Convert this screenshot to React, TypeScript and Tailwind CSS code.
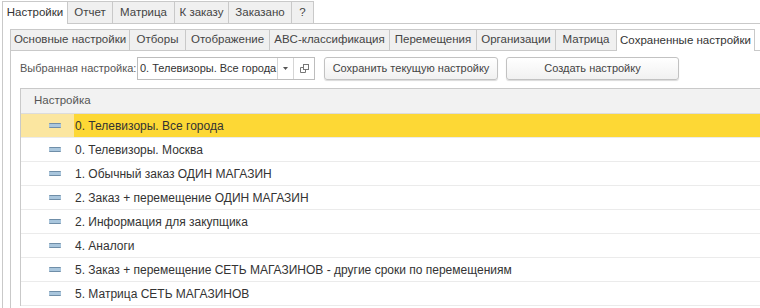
import React from "react";

type Tab = [string, string];

const outerTabs: Tab[] = [
  ["Настройки", "w-[66px]"],
  ["Отчет", "w-[46px]"],
  ["Матрица", "w-[63px]"],
  ["К заказу", "w-[55px]"],
  ["Заказано", "w-[64px]"],
  ["?", "w-[23px]"],
];
const innerTabs: Tab[] = [
  ["Основные настройки", "w-[120px]"],
  ["Отборы", "w-[57px]"],
  ["Отображение", "w-[85px]"],
  ["ABC-классификация", "w-[121px]"],
  ["Перемещения", "w-[88px]"],
  ["Организации", "w-[80px]"],
  ["Матрица", "w-[62px]"],
  ["Сохраненные настройки", "w-[139px]"],
];

const rows = [
  "0. Телевизоры. Все города",
  "0. Телевизоры. Москва",
  "1. Обычный заказ ОДИН МАГАЗИН",
  "2. Заказ + перемещение ОДИН МАГАЗИН",
  "2. Информация для закупщика",
  "4. Аналоги",
  "5. Заказ + перемещение СЕТЬ МАГАЗИНОВ - другие сроки по перемещениям",
  "5. Матрица СЕТЬ МАГАЗИНОВ",
];

function Tabs({ items, active, height }: { items: Tab[]; active: number; height: string }) {
  return (
    <div className={`flex ${height} text-[11.5px] whitespace-nowrap`}>
      {items.map(([t, w], i) => (
        <div
          key={t}
          className={
            i === active
              ? `${w} flex items-center justify-center bg-white border border-b-0 border-[#c9c9c9] -ml-px first:ml-0 text-[#333] relative z-10`
              : `${w} flex items-center justify-center bg-[#f0f0f0] border border-[#c9c9c9] -ml-px first:ml-0 text-[#444]`
          }
        >
          {t}
        </div>
      ))}
      <div className="flex-1 border-b border-[#c9c9c9]" />
    </div>
  );
}

function RowIcon() {
  return (
    <div className="w-3 h-[5px] rounded-[1px] bg-[#a9c6dd] border-y border-[#6f8ea8]" />
  );
}

export default function App() {
  return (
    <div className="w-[760px] h-[308px] overflow-hidden bg-white text-[12px] font-['Liberation_Sans',Arial,sans-serif] pl-[2px] pt-px">
      <Tabs items={outerTabs} active={0} height="h-[23px]" />
      <div className="border-l border-[#c9c9c9] -mt-px h-full pl-[7px] pt-[6px]">
        <Tabs items={innerTabs} active={7} height="h-[22px]" />
        <div className="border-l border-[#c9c9c9] -mt-px h-full pl-[9px]">
          <div className="flex items-center pt-[7px] text-[11px] whitespace-nowrap">
            <span className="text-[#555] w-[117px]">Выбранная настройка:</span>
            <div className="flex h-[23px] border border-[#bdbdbd] bg-white">
              <div className="w-[139px] flex items-center pl-[2px] text-[#333] overflow-hidden text-[11px]">
                0. Телевизоры. Все города
              </div>
              <div className="w-[16px] border-l border-[#d5d5d5] flex items-center justify-center">
                <svg width="5" height="3" viewBox="0 0 5 3">
                  <path d="M0 0h5L2.5 3z" fill="#555" />
                </svg>
              </div>
              <div className="w-[21px] border-l border-[#d5d5d5] flex items-center justify-center">
                <svg width="11" height="11" viewBox="0 0 11 11" fill="none" stroke="#777" strokeWidth="1">
                  <rect x="4.5" y="1.5" width="5" height="5" />
                  <path d="M4.5 4.5h-3v5h5v-3" />
                </svg>
              </div>
            </div>
            <button className="ml-[9px] w-[174px] h-[23px] rounded-[3px] border border-[#c2c2c2] bg-gradient-to-b from-white to-[#f1f1f1] shadow-[0_1px_1px_rgba(0,0,0,0.15)] text-[#444] text-[11px]">
              Сохранить текущую настройку
            </button>
            <button className="ml-[8px] w-[173px] h-[23px] rounded-[3px] border border-[#c2c2c2] bg-gradient-to-b from-white to-[#f1f1f1] shadow-[0_1px_1px_rgba(0,0,0,0.15)] text-[#444] text-[11px]">
              Создать настройку
            </button>
          </div>
          <div className="mt-[8px] border-l border-t border-[#c9c9c9]">
            <div className="h-[25px] bg-[#f2f2f2] border-b border-[#dcdcdc] flex items-center pl-[13px] text-[#555] text-[11.5px]">
              Настройка
            </div>
            {rows.map((r, i) => (
              <div key={r} className="flex h-[24px] border-b border-[#ebebeb]">
                <div
                  className={`w-[53px] flex items-center justify-end pr-[13px] ${i === 0 ? "bg-[#fbe6a0]" : ""}`}
                >
                  <RowIcon />
                </div>
                <div
                  className={`flex-1 flex items-center pl-px whitespace-nowrap text-[#333] ${i === 0 ? "bg-[#fdd835]" : ""}`}
                >
                  {r}
                </div>
              </div>
            ))}
          </div>
        </div>
      </div>
    </div>
  );
}
